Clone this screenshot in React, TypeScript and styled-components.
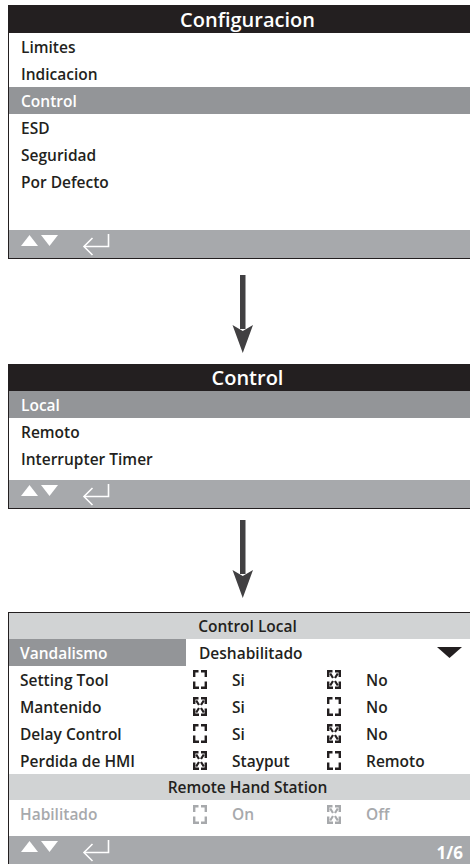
import React from 'react';
import styled, { createGlobalStyle } from 'styled-components';

const GlobalStyle = createGlobalStyle`
    html, body {
        margin: 0;
        padding: 0;
        background: #ffffff;
        overflow: hidden;
    }
    body {
        font-family: "Open Sans", "Noto Sans", "Liberation Sans", sans-serif;
        color: #231f20;
    }
`;

const INK = '#231f20';
const MID = '#939598';
const BAR = '#a7a9ac';
const PALE = '#d1d3d4';

interface IOption {
    checked: boolean;
    label: string;
}
interface ISetting {
    label: string;
    options: IOption[];
}

const settings: ISetting[] = [
    { label: 'Setting Tool', options: [{ checked: false, label: 'Si' }, { checked: true, label: 'No' }] },
    { label: 'Mantenido', options: [{ checked: true, label: 'Si' }, { checked: false, label: 'No' }] },
    { label: 'Delay Control', options: [{ checked: false, label: 'Si' }, { checked: true, label: 'No' }] },
    { label: 'Perdida de HMI', options: [{ checked: true, label: 'Stayput' }, { checked: false, label: 'Remoto' }] },
];

const NavIcons = () => (
    <svg width="100" height="26" viewBox="0 0 100 26">
        <polygon points="7,15 15.5,4 24,15" fill="#fff" />
        <polygon points="27,4 44,4 35.5,15" fill="#fff" />
        <path d="M94.5 3 V15.5 H70" stroke="#fff" strokeWidth="1.6" fill="none" />
        <path d="M78.5 7 L70 15.5 L78.5 24" stroke="#fff" strokeWidth="1.6" fill="none" />
    </svg>
);

const CheckBox = ({ checked, color }: { checked: boolean; color: string }) => (
    <svg width="14" height="19" viewBox="0 0 14 19">
        <g stroke={color} strokeWidth="2.4" fill="none">
            <path d="M1.2 7 V1.2 H5.5" />
            <path d="M8 1.2 H12.8 V7" />
            <path d="M1.2 11.5 V17.8 H6" />
            <path d="M8 17.8 H12.8 V11.5" />
        </g>
        {checked && (
            <g stroke={color} strokeWidth="2.2" fill="none">
                <path d="M3.2 3.5 L6 8 M8 11 L10.8 15.5" />
                <path d="M10.8 3.5 L8 8 M6 11 L3.2 15.5" />
            </g>
        )}
    </svg>
);

const Arrow = () => (
    <svg width="22" height="78" viewBox="0 0 22 78">
        <rect x="8" y="0" width="5.5" height="54" fill="#414042" />
        <polygon points="0.5,50 10.75,78 21,50 10.75,56" fill="#414042" />
    </svg>
);

const App: React.FC = () => {
    return (
        <>
            <GlobalStyle />
            <Page>
                <Panel>
                    <Header>Configuracion</Header>
                    {['Limites', 'Indicacion', 'Control', 'ESD', 'Seguridad', 'Por Defecto'].map((item) => (
                        <MenuRow key={item} $active={item === 'Control'}>{item}</MenuRow>
                    ))}
                    <Spacer $h={35} />
                    <Footer>
                        <NavIcons />
                    </Footer>
                </Panel>

                <ArrowWrap>
                    <Arrow />
                </ArrowWrap>

                <Panel>
                    <Header $h={27}>Control</Header>
                    {['Local', 'Remoto', 'Interrupter Timer'].map((item) => (
                        <MenuRow key={item} $active={item === 'Local'}>{item}</MenuRow>
                    ))}
                    <Spacer $h={8} />
                    <Footer>
                        <NavIcons />
                    </Footer>
                </Panel>

                <ArrowWrap $top={11} $bottom={14}>
                    <Arrow />
                </ArrowWrap>

                <Panel $topBorder>
                    <Header $light $h={26}>Control Local</Header>
                    <SettingRow>
                        <SettingLabel $active>Vandalismo</SettingLabel>
                        <ValueCell>
                            Deshabilitado
                            <svg width="25" height="11" viewBox="0 0 25 11">
                                <polygon points="0,0 25,0 12.5,11" fill={INK} />
                            </svg>
                        </ValueCell>
                    </SettingRow>
                    {settings.map((s) => (
                        <SettingRow key={s.label}>
                            <SettingLabel>{s.label}</SettingLabel>
                            {s.options.map((o) => (
                                <OptionCell key={o.label}>
                                    <CheckBox checked={o.checked} color={INK} />
                                    <OptionText>{o.label}</OptionText>
                                </OptionCell>
                            ))}
                        </SettingRow>
                    ))}
                    <Header $light $h={26}>Remote Hand Station</Header>
                    <SettingRow $disabled $h={28}>
                        <SettingLabel>Habilitado</SettingLabel>
                        <OptionCell>
                            <CheckBox checked={false} color={BAR} />
                            <OptionText>On</OptionText>
                        </OptionCell>
                        <OptionCell>
                            <CheckBox checked color={BAR} />
                            <OptionText>Off</OptionText>
                        </OptionCell>
                    </SettingRow>
                    <Spacer $h={8} />
                    <Footer $flush>
                        <NavIcons />
                        <PageNum>1/6</PageNum>
                    </Footer>
                </Panel>
            </Page>
        </>
    );
};

const Page = styled.div`
    padding: 5px 0 0 8px;
    width: 478px;
`;
const Panel = styled.section<{ $topBorder?: boolean }>`
    width: 478px;
    border-left: 1px solid ${INK};
    border-bottom: ${(p) => (p.$topBorder ? 'none' : `1px solid ${INK}`)};
    border-top: ${(p) => (p.$topBorder ? `1.5px solid ${INK}` : 'none')};
    box-sizing: border-box;
`;
const Header = styled.div<{ $light?: boolean; $h?: number }>`
    height: ${(p) => p.$h ?? 28}px;
    background: ${(p) => (p.$light ? PALE : INK)};
    color: ${(p) => (p.$light ? INK : '#ffffff')};
    font-size: ${(p) => (p.$light ? 15.5 : 20)}px;
    font-weight: 600;
    display: flex;
    align-items: center;
    justify-content: center;
`;
const MenuRow = styled.div<{ $active?: boolean }>`
    height: 27px;
    padding-left: 12px;
    display: flex;
    align-items: center;
    font-size: 15.5px;
    font-weight: 600;
    background: ${(p) => (p.$active ? MID : 'transparent')};
    color: ${(p) => (p.$active ? '#ffffff' : INK)};
`;
const Spacer = styled.div<{ $h: number }>`
    height: ${(p) => p.$h}px;
`;
const Footer = styled.div<{ $flush?: boolean }>`
    height: 28px;
    background: ${BAR};
    display: flex;
    align-items: center;
    justify-content: space-between;
    padding: 0 23px 0 5px;
`;
const PageNum = styled.span`
    color: #ffffff;
    font-size: 17px;
    font-weight: 700;
    line-height: 1;
    padding-top: 4px;
`;
const ArrowWrap = styled.div<{ $top?: number; $bottom?: number }>`
    display: flex;
    padding: ${(p) => p.$top ?? 16}px 0 ${(p) => p.$bottom ?? 11}px 224px;
    svg {
        display: block;
    }
`;
const SettingRow = styled.div<{ $disabled?: boolean; $h?: number }>`
    display: grid;
    grid-template-columns: 177px 134px 1fr;
    height: ${(p) => p.$h ?? 27}px;
    font-size: 15.5px;
    font-weight: 600;
    color: ${(p) => (p.$disabled ? BAR : INK)};
`;
const SettingLabel = styled.div<{ $active?: boolean }>`
    display: flex;
    align-items: center;
    padding-left: 11px;
    background: ${(p) => (p.$active ? MID : 'transparent')};
    color: ${(p) => (p.$active ? '#ffffff' : 'inherit')};
`;
const ValueCell = styled.div`
    grid-column: 2 / span 2;
    display: flex;
    align-items: center;
    justify-content: space-between;
    padding: 0 24px 0 13px;
`;
const OptionCell = styled.div`
    display: flex;
    align-items: center;
    padding-left: 7px;
    svg {
        flex: none;
    }
`;
const OptionText = styled.span`
    margin-left: 25px;
`;

export default App;
